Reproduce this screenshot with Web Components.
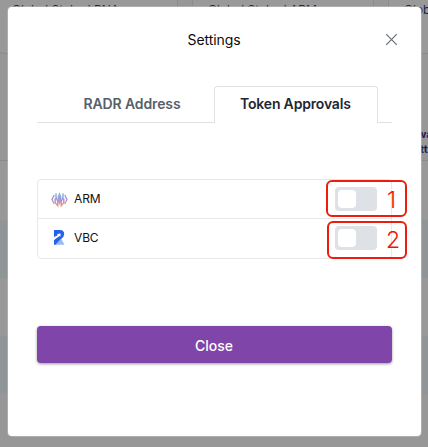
<!DOCTYPE html>
<html lang="en"><head><meta charset="utf-8"><title>Settings</title>
<style>html,body{margin:0;height:100%;overflow:hidden}body{font-family:Inter,"Liberation Sans",sans-serif;color:#111}</style></head>
<body>
<app-shell>
  <page-backdrop slot="page"></page-backdrop>
  <settings-modal heading="Settings">
    <tab-bar></tab-bar>
    <token-list>
      <token-row name="ARM"><arm-icon slot="icon"></arm-icon><toggle-switch slot="control"></toggle-switch></token-row>
      <token-row name="VBC"><vbc-icon slot="icon"></vbc-icon><toggle-switch slot="control"></toggle-switch></token-row>
    </token-list>
    <primary-button>Close</primary-button>
  </settings-modal>
  <number-callout slot="notes" style="left:326px;top:180px;width:81px;height:37px;padding:4px 9px 0 0">1</number-callout>
  <number-callout slot="notes" style="left:327px;top:221px;width:80px;height:38px;padding:0 5px 0 0">2</number-callout>
</app-shell>
<script>
const define=(name,html,init)=>customElements.define(name,class extends HTMLElement{
  constructor(){super();this.attachShadow({mode:'open'}).innerHTML=html;}
  connectedCallback(){if(init)init(this,this.shadowRoot);}
});

define('app-shell',`<style>
:host{display:block;position:relative;width:428px;height:447px;overflow:hidden;background:#979797}
.layer{position:absolute;inset:0}
.front{box-sizing:border-box;padding:7px 7px 11px 8px}
</style><div class="layer"><slot name="page"></slot></div><div class="layer front"><slot></slot></div><slot name="notes"></slot>`);

define('page-backdrop',`<style>
:host{display:block;height:447px;color:#20204f;font-size:12px}
.cards{display:flex;gap:14px;height:54px;margin-left:-4px}
.card{box-sizing:border-box;flex:none;width:182px;border:1px solid #8c8c8c;border-top:0;border-radius:0 0 8px 8px;padding:2px 0 0 15px;line-height:15px;white-space:nowrap;background:#999}
.mid{height:107px;box-sizing:border-box;border-bottom:1px solid #8a8a8a;display:flex;flex-direction:column;align-items:flex-end;padding-top:73px;font-weight:700;line-height:15px;font-size:11px}
.mid span{width:11px;white-space:nowrap}
.mid span+span{width:8px}
.gap{height:58px;background:#999}.mid+.gap{height:59px}.band{height:58px;background:#909598}
</style><div class="cards"><div class="card">Global Staked RNA</div><div class="card">Global Staked ARM</div><div class="card">Glob</div></div>
<div class="mid"><span>wa</span><span>tt</span></div>
<div class="gap"></div><div class="band"></div><div class="gap"></div><div class="band"></div>`);

define('settings-modal',`<style>
:host{display:block;box-sizing:border-box;width:413px;height:429px;background:#fff;border-radius:4px;box-shadow:0 0 0 1px #bbb9}
header{display:grid;grid-template-columns:1fr auto 1fr;align-items:center;height:65px;padding:0 23px 0 22px}
h1{margin:0;font-size:14px;font-weight:400;line-height:20px;grid-column:2;color:#0c0c0c;letter-spacing:-.08px}
svg{display:block;justify-self:end;grid-column:3}
main{padding:14px 29px 0 29px}
</style><header><h1></h1><svg width="13" height="13" viewBox="0 0 13 13"><path d="M1.2 1.2 11.8 11.8M11.8 1.2 1.2 11.8" stroke="#647078" stroke-width="1.2"/></svg></header><main><slot></slot></main>`,
(e,r)=>r.querySelector('h1').textContent=e.getAttribute('heading'));

define('tab-bar',`<style>
:host{display:flex;height:37px;font-size:14px;font-weight:600;line-height:35px;white-space:nowrap;letter-spacing:-.12px}
div{box-sizing:border-box;border-bottom:1px solid #dee2e6}
.pad{width:14px;flex:none}.one{width:163px;color:#57606a;padding-left:32.5px}
.two{width:164px;border:1px solid #dee2e6;border-bottom:0;border-radius:4px 4px 0 0;padding-left:25px;color:#1d2733;line-height:34px;letter-spacing:-.18px}
.end{flex:1}
</style><div class="pad"></div><div class="one">RADR Address</div><div class="two">Token Approvals</div><div class="end"></div>`);

define('token-list',`<style>
:host{display:grid;grid-template-rows:38px 40px;box-sizing:border-box;height:80px;margin-top:56px;border:1px solid #e6e8ea;border-radius:4px}
::slotted(token-row:not(:first-child)){border-top:1px solid #e6e8ea;padding-bottom:2px}
</style><slot></slot>`);
define('token-row',`<style>
:host{display:flex;box-sizing:border-box;align-items:center;padding:0 14px 0 13px}
.name{margin-left:6px;flex:1;font-size:12px;line-height:16px;color:#111;letter-spacing:-.15px}
</style><slot name="icon"></slot><span class="name"></span><slot name="control"></slot>`,
(e,r)=>r.querySelector('.name').textContent=e.getAttribute('name'));

define('toggle-switch',`<style>
:host{display:block;box-sizing:border-box;width:42px;height:24px;padding:3px;background:#dee2e6;border-radius:4px}
div{width:18px;height:18px;border-radius:4px;background:#fff}
</style><div></div>`);

define('arm-icon',`<style>:host,svg{display:block}</style><svg width="17" height="17" viewBox="0 0 17 17" fill="none" stroke-width="1.3">
<defs><linearGradient id="g" x1="0" y1="1" x2="0" y2="16" gradientUnits="userSpaceOnUse"><stop stop-color="#59cfc5"/><stop offset=".48" stop-color="#9a80e0"/><stop offset="1" stop-color="#f29b66"/></linearGradient>
<linearGradient id="s" x1="0" y1="3" x2="0" y2="14" gradientUnits="userSpaceOnUse"><stop stop-color="#64bfd0"/><stop offset=".45" stop-color="#ad83db"/><stop offset="1" stop-color="#f2a05e"/></linearGradient></defs>
<path d="M8.5 1 10.4 5.5 9.7 12 8.5 14 7.3 12 6.6 5.5Z" fill="url(#g)" opacity=".85"/>
<path d="M5 2.2V6.2L6.8 10.5V14.8L4.2 11.6V7.3M12 2.2V6.2L10.2 10.5V14.8L12.8 11.6V7.3" stroke="url(#g)"/>
<path d="M3.2 4 1 8.5 3.4 13M13.8 4 16 8.5 13.6 13" stroke="url(#s)"/></svg>`);
define('vbc-icon',`<style>:host,svg{display:block}</style><svg width="17" height="17" viewBox="0 0 17 17">
<path d="M3 1H9Q13.4 1.2 13.2 5.2 13 7.6 10.6 9.6L5 15.8H3V11L8.5 6.8Z" fill="#2462e8"/>
<path d="M3 1H9L8 6 3 8Z" fill="#2462e8"/>
<path d="M2.6 8.8 7 6 5.8 5 9.6 4.4 9.4 7.8 8.5 7 3 10.8Z" fill="#fff"/>
<path d="M4.3 15.8 10.2 9.7 13.5 15.8Z" fill="#9bb9fa"/></svg>`);

define('primary-button',`<style>
:host{display:block;margin-top:67px}
button{display:block;width:100%;height:37px;border:0;border-radius:4px;padding:1px 1px 0 0;background:#7f45a8;color:#fff;font:500 14px Inter,"Liberation Sans",sans-serif;box-shadow:0 1px 3px #0006}
</style><button><slot></slot></button>`);

define('number-callout',`<style>
:host{position:absolute;box-sizing:border-box;border:2.5px solid #ee1c0c;border-radius:6px;display:flex;align-items:center;justify-content:flex-end;color:#f01407;font:300 23px/1 Inter,"Liberation Sans",sans-serif}
</style><slot></slot>`);
</script></body></html>
